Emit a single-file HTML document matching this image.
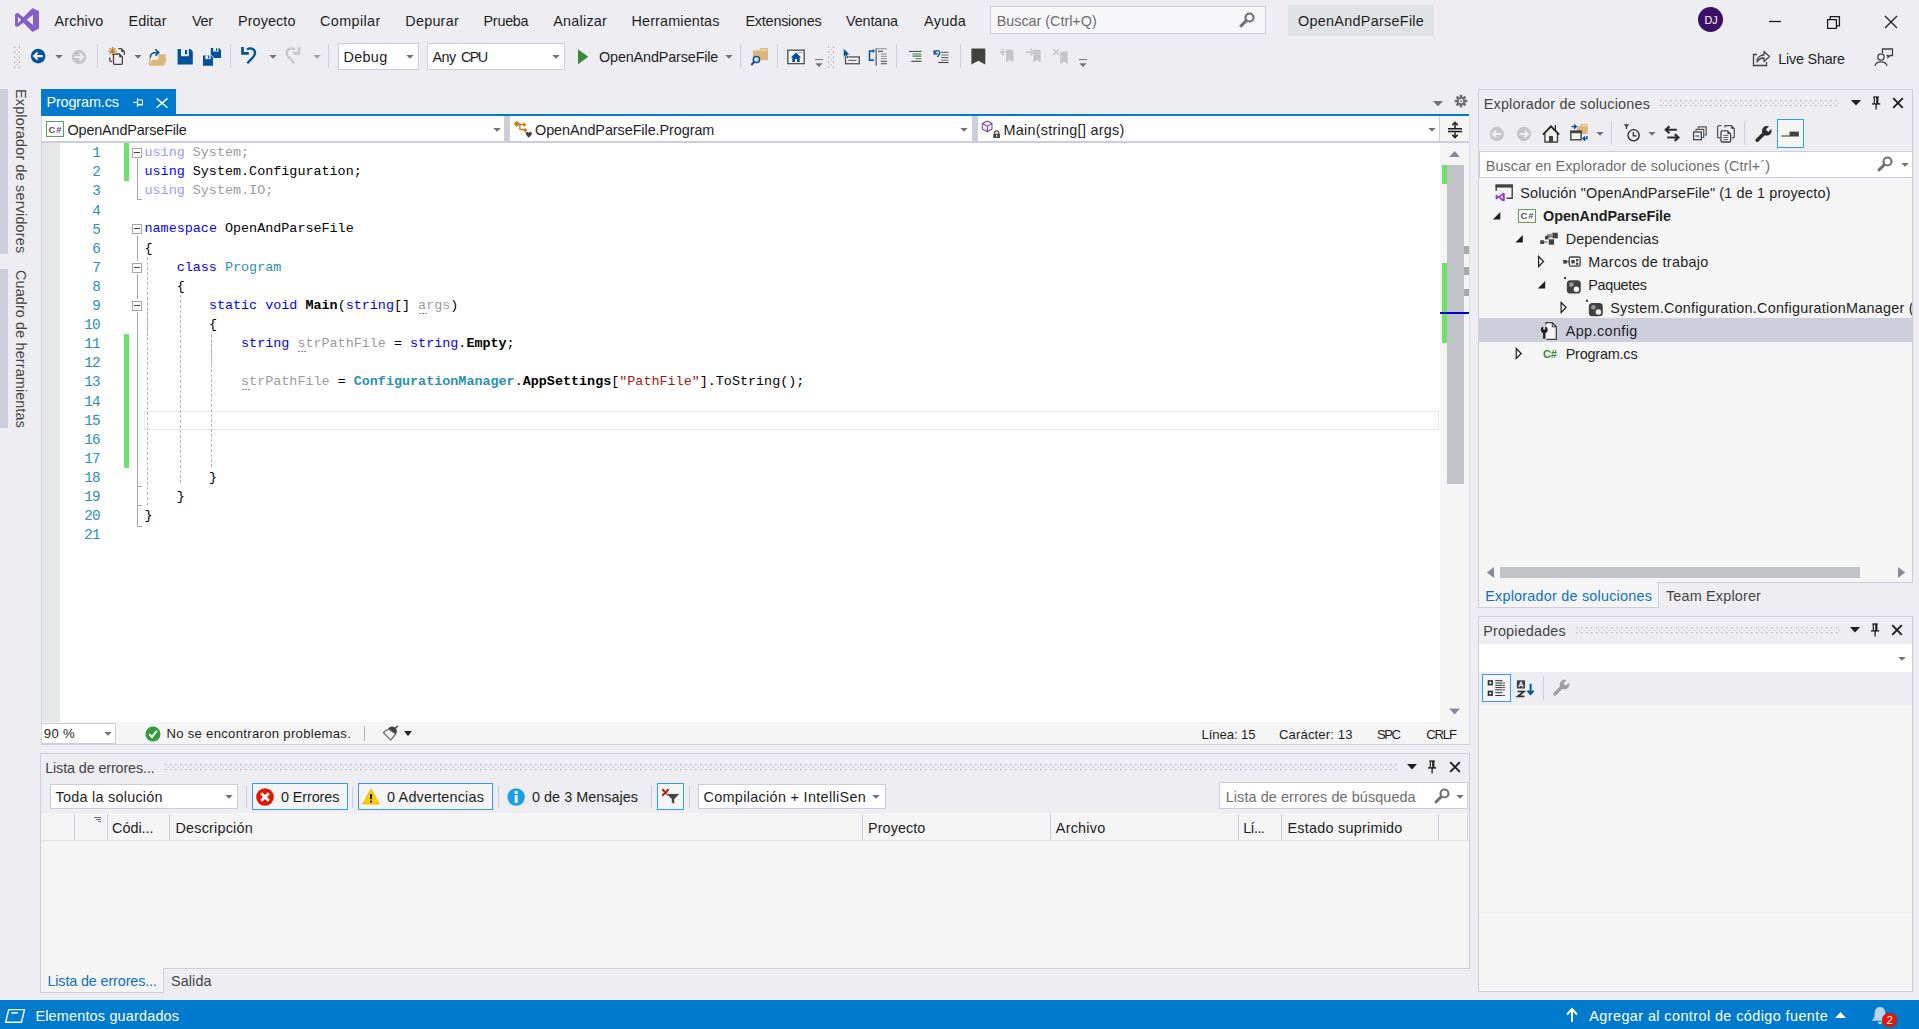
<!DOCTYPE html>
<html lang="es"><head><meta charset="utf-8"><title>OpenAndParseFile - Microsoft Visual Studio</title>
<style>
html,body{margin:0;padding:0;}
body{width:1919px;height:1029px;overflow:hidden;background:#EEEEF2;font-family:"Liberation Sans", sans-serif;position:relative;}
.r{position:absolute;display:block;}
.t{position:absolute;white-space:pre;line-height:20px;height:20px;}
</style></head>
<body>
<svg class="r" style="left:14px;top:7px;" width="26" height="26" viewBox="14 7 26 26"><path d="M32.500 7.950 L38.970 11.270 V28.600 L32.500 32.100 L23.400 22.800 L17.600 27 L15 25.800 V14.250 L17.600 12.850 L23.400 17.200 Z M33 14.800 L26.700 19.850 L33 25.100 Z M17.970 16.700 V23.200 L21.100 19.850 Z" fill="#865FC5" fill-rule="evenodd"/></svg>
<span class="t" style="left:54.5px;top:11.01px;font-size:14.4px;color:#1e1e1e;letter-spacing:0.123px;">Archivo</span>
<span class="t" style="left:128.5px;top:11.01px;font-size:14.4px;color:#1e1e1e;letter-spacing:0.074px;">Editar</span>
<span class="t" style="left:192px;top:11.01px;font-size:14.4px;color:#1e1e1e;letter-spacing:-0.244px;">Ver</span>
<span class="t" style="left:238px;top:11.01px;font-size:14.4px;color:#1e1e1e;letter-spacing:0.094px;">Proyecto</span>
<span class="t" style="left:320px;top:11.01px;font-size:14.4px;color:#1e1e1e;letter-spacing:0.390px;">Compilar</span>
<span class="t" style="left:405.3px;top:11.01px;font-size:14.4px;color:#1e1e1e;letter-spacing:0.231px;">Depurar</span>
<span class="t" style="left:483.5px;top:11.01px;font-size:14.4px;color:#1e1e1e;letter-spacing:-0.256px;">Prueba</span>
<span class="t" style="left:553.3px;top:11.01px;font-size:14.4px;color:#1e1e1e;letter-spacing:0.227px;">Analizar</span>
<span class="t" style="left:631.5px;top:11.01px;font-size:14.4px;color:#1e1e1e;letter-spacing:0.141px;">Herramientas</span>
<span class="t" style="left:745.5px;top:11.01px;font-size:14.4px;color:#1e1e1e;letter-spacing:-0.229px;">Extensiones</span>
<span class="t" style="left:846px;top:11.01px;font-size:14.4px;color:#1e1e1e;letter-spacing:-0.127px;">Ventana</span>
<span class="t" style="left:924px;top:11.01px;font-size:14.4px;color:#1e1e1e;letter-spacing:0.323px;">Ayuda</span>
<div class="r" style="left:990px;top:6px;width:276px;height:28px;background:#F7F7FA;box-sizing:border-box;border:1px solid #CCCEDB;"></div>
<span class="t" style="left:996.7px;top:11.01px;font-size:14.4px;color:#6D6D6D;letter-spacing:-0.025px;">Buscar (Ctrl+Q)</span>
<svg class="r" style="left:1238px;top:11px;" width="18" height="18" viewBox="0 0 18 18"><circle cx="11.5" cy="6.5" r="4" fill="none" stroke="#717171" stroke-width="2.2"/><path d="M8.6 9.4 L2.2 15.8" stroke="#717171" stroke-width="3" stroke-linecap="butt"/></svg>
<div class="r" style="left:1288px;top:5px;width:146px;height:31px;background:#E0E3E6;"></div>
<span class="t" style="left:1298px;top:11.41px;font-size:14.4px;color:#1e1e1e;letter-spacing:0.284px;">OpenAndParseFile</span>
<div class="r" style="left:1698px;top:7px;width:25px;height:25px;background:#3B1064;border-radius:50%;"></div>
<span class="t" style="left:1704.6px;top:10.26px;font-size:10.8px;color:#FFFFFF;letter-spacing:-0.069px;">DJ</span>
<svg class="r" style="left:1764px;top:10px;" width="24" height="24" viewBox="0 0 24 24"><path d="M5 11.5 H17" stroke="#1E1E1E" stroke-width="1.3"/></svg>
<svg class="r" style="left:1822px;top:10px;" width="24" height="24" viewBox="0 0 24 24"><path d="M5.6 9.6 H14.4 V18.4 H5.6 Z" fill="none" stroke="#1E1E1E" stroke-width="1.3"/><path d="M8.2 9.4 V6.6 H17.4 V15.8 H14.6" fill="none" stroke="#1E1E1E" stroke-width="1.3"/></svg>
<svg class="r" style="left:1879px;top:10px;" width="24" height="24" viewBox="0 0 24 24"><path d="M6 6 L18 18 M18 6 L6 18" stroke="#1E1E1E" stroke-width="1.3"/></svg>
<svg class="r" style="left:14px;top:46px;" width="7" height="22" viewBox="14 46 7 22"><rect x="14.1" y="46.6" width="1.1" height="1.1" fill="#8E8E94"/><rect x="18.9" y="46.6" width="1.1" height="1.1" fill="#8E8E94"/><rect x="16.5" y="49.1" width="1.2" height="1.2" fill="#B4B4BA"/><rect x="14.1" y="51.6" width="1.1" height="1.1" fill="#8E8E94"/><rect x="18.9" y="51.6" width="1.1" height="1.1" fill="#8E8E94"/><rect x="16.5" y="54.1" width="1.2" height="1.2" fill="#B4B4BA"/><rect x="14.1" y="56.6" width="1.1" height="1.1" fill="#8E8E94"/><rect x="18.9" y="56.6" width="1.1" height="1.1" fill="#8E8E94"/><rect x="16.5" y="59.1" width="1.2" height="1.2" fill="#B4B4BA"/><rect x="14.1" y="61.6" width="1.1" height="1.1" fill="#8E8E94"/><rect x="18.9" y="61.6" width="1.1" height="1.1" fill="#8E8E94"/><rect x="16.5" y="64.1" width="1.2" height="1.2" fill="#B4B4BA"/><rect x="14.1" y="66.6" width="1.1" height="1.1" fill="#8E8E94"/><rect x="18.9" y="66.6" width="1.1" height="1.1" fill="#8E8E94"/></svg>
<svg class="r" style="left:29px;top:47px;" width="19" height="19" viewBox="29 47 19 19"><circle cx="38.1" cy="56.1" r="7.3" fill="#00529B"/><path d="M42.8 56.1 H35 M37.6 52.6 L34 56.1 L37.6 59.6" fill="none" stroke="#F3F3F6" stroke-width="2.1"/></svg>
<svg class="r" style="left:54.7px;top:55px;" width="8.0" height="4" viewBox="54.7 55 8.0 4"><path d="M55.0 55 H62.400000000000006 L58.7 58.8 Z" fill="#717171"/></svg>
<svg class="r" style="left:70px;top:48px;" width="19" height="19" viewBox="70 48 19 19"><circle cx="79" cy="57" r="7.2" fill="#C6C6CA"/><path d="M74.3 57 H82.2 M79.5 53.5 L83.1 57 L79.5 60.5" fill="none" stroke="#EEEEF2" stroke-width="2.1"/></svg>
<div class="r" style="left:97px;top:44px;width:1px;height:24px;background:#CCCEDB;"></div>
<svg class="r" style="left:106px;top:45px;" width="21" height="22" viewBox="106 45 21 22"><path d="M118.3 48.7 H121.3 L124.3 51.7 V55" fill="none" stroke="#424242" stroke-width="1.3"/><path d="M121.2 48.8 V52 H124.3 Z" fill="#424242"/><path d="M109.8 57.3 V60.3 Q109.8 61.4 111 61.4 H112" fill="none" stroke="#424242" stroke-width="1.3"/><path d="M114.8 54 H119.3 L122.4 57 V63 Q122.4 64.3 121.2 64.3 H114.8 Q113.5 64.3 113.5 63 V55.2 Q113.5 54 114.8 54 Z" fill="#F0F0F2" stroke="#424242" stroke-width="1.3"/><path d="M119.2 54 V57.2 H122.4 Z" fill="#424242"/><path d="M112.5 46.9 V55.5 M108.2 51.2 H116.8 M109.5 48.2 L115.5 54.2 M115.5 48.2 L109.500 54.2" stroke="#C27D1A" stroke-width="1.15"/></svg>
<svg class="r" style="left:133.8px;top:55px;" width="8.0" height="4" viewBox="133.8 55 8.0 4"><path d="M134.10000000000002 55 H141.5 L137.8 58.8 Z" fill="#717171"/></svg>
<svg class="r" style="left:147px;top:47px;" width="22" height="21" viewBox="147 47 22 21"><path d="M158.4 54.2 H164.8 Q165.8 54.2 165.8 55.2 V60 H158.4 Z" fill="#DCB67A"/><path d="M149 56.5 H150.6 V65 H149 Z" fill="#DCB67A"/><path d="M149 65.7 L152.300 59.8 H166.8 L163.8 65.7 Z" fill="#DCB67A"/><path d="M150.6 57.6 C149.800 54.5 152 52.4 158 52.6 M155.4 49.4 L158.8 52.600 L155.400 55.8" fill="none" stroke="#00529B" stroke-width="1.45"/></svg>
<svg class="r" style="left:177px;top:48px;" width="17" height="18" viewBox="177 48 17 18"><path d="M177.600 49 H190.300 L192.800 51.5 V64.400 H177.600 Z" fill="#00529B"/><rect x="181" y="49" width="7.800" height="7.200" fill="#EEEEF2"/><rect x="185" y="50" width="2" height="4.200" fill="#00529B"/></svg>
<svg class="r" style="left:202px;top:47px;" width="20" height="20" viewBox="202 47 20 20"><path d="M210.800 48 H219 L221 50 V58 H210.800 Z" fill="#00529B"/><rect x="213.200" y="48" width="5.300" height="3.600" fill="#EEEEF2"/><rect x="216" y="48.300" width="1.200" height="2.600" fill="#00529B"/><path d="M202.500 55 H211.500 L213.600 57.200 V66.200 H202.500 Z" fill="#EEEEF2"/><path d="M203 55.500 H211 L213 57.500 V65.700 H203 Z" fill="#00529B"/><rect x="205.300" y="55.500" width="5.300" height="3.600" fill="#EEEEF2"/><rect x="208" y="55.800" width="1.200" height="2.600" fill="#00529B"/></svg>
<div class="r" style="left:230px;top:44px;width:1px;height:24px;background:#CCCEDB;"></div>
<svg class="r" style="left:239px;top:45px;" width="20" height="21" viewBox="239 45 20 21"><path d="M242.500 47 V53.400 H248.800" fill="none" stroke="#00529B" stroke-width="2.700"/><path d="M247 49.600 C249.500 47.800 252.800 48.200 254.300 50.400 C255.800 52.800 255 55 253 57.200 L247.300 63.300" fill="none" stroke="#00529B" stroke-width="2.300"/></svg>
<svg class="r" style="left:268.7px;top:55px;" width="8.0" height="4" viewBox="268.7 55 8.0 4"><path d="M269.0 55 H276.4 L272.7 58.8 Z" fill="#717171"/></svg>
<svg class="r" style="left:284px;top:45px;" width="20" height="21" viewBox="284 45 20 21"><path d="M299 47.200 V53.400 H293.300" fill="none" stroke="#C6C6CA" stroke-width="2.700"/><path d="M294.800 49.600 C292.300 47.800 289 48.200 287.500 50.400 C286 52.800 286.800 55 288.800 57.200 L294.500 63.300" fill="none" stroke="#C6C6CA" stroke-width="2.300"/></svg>
<svg class="r" style="left:312.8px;top:55px;" width="8.0" height="4" viewBox="312.8 55 8.0 4"><path d="M313.1 55 H320.5 L316.8 58.8 Z" fill="#A0A0A4"/></svg>
<div class="r" style="left:328px;top:44px;width:1px;height:24px;background:#CCCEDB;"></div>
<div class="r" style="left:338px;top:43px;width:81px;height:27px;background:#FFFFFF;box-sizing:border-box;border:1px solid #CCCEDB;"></div>
<span class="t" style="left:343.4px;top:46.51px;font-size:14.4px;color:#1e1e1e;letter-spacing:0.354px;">Debug</span>
<svg class="r" style="left:405.5px;top:55px;" width="8.0" height="4" viewBox="405.5 55 8.0 4"><path d="M405.8 55 H413.2 L409.5 58.8 Z" fill="#717171"/></svg>
<div class="r" style="left:427px;top:43px;width:138px;height:27px;background:#FFFFFF;box-sizing:border-box;border:1px solid #CCCEDB;"></div>
<span class="t" style="left:432.4px;top:46.51px;font-size:14.4px;color:#1e1e1e;letter-spacing:-0.485px;">Any</span>
<span class="t" style="left:461px;top:46.51px;font-size:14.4px;color:#1e1e1e;letter-spacing:-1.596px;">CPU</span>
<svg class="r" style="left:551.5px;top:55px;" width="8.0" height="4" viewBox="551.5 55 8.0 4"><path d="M551.8 55 H559.2 L555.5 58.8 Z" fill="#717171"/></svg>
<svg class="r" style="left:576px;top:48px;" width="14" height="18" viewBox="576 48 14 18"><path d="M578 49.300 L588.300 56.800 L578 64.300 Z" fill="#388A34"/></svg>
<span class="t" style="left:599px;top:46.51px;font-size:14.4px;color:#1e1e1e;letter-spacing:-0.148px;">OpenAndParseFile</span>
<svg class="r" style="left:724.5px;top:55px;" width="8.0" height="4" viewBox="724.5 55 8.0 4"><path d="M724.8 55 H732.2 L728.5 58.8 Z" fill="#717171"/></svg>
<div class="r" style="left:740px;top:44px;width:1px;height:24px;background:#CCCEDB;"></div>
<svg class="r" style="left:750px;top:47px;" width="20" height="20" viewBox="750 47 20 20"><path d="M752.900 50.500 H759 L760.500 48 H767 Q768 48 768 49 V60.300 H752.900 Z" fill="#DCB67A"/><rect x="760.800" y="49.500" width="6" height="1.300" fill="#F0E0C4"/><circle cx="756.400" cy="59.500" r="3.100" fill="#EEEEF2" stroke="#00529B" stroke-width="1.500"/><path d="M754.300 61.800 L751.300 65" stroke="#00529B" stroke-width="2"/></svg>
<div class="r" style="left:777px;top:44px;width:1px;height:24px;background:#CCCEDB;"></div>
<svg class="r" style="left:786px;top:48px;" width="21" height="18" viewBox="786 48 21 18"><rect x="787.800" y="50.200" width="16.400" height="13.400" fill="#F6F6F6" stroke="#555555" stroke-width="1.400"/><path d="M796 52.600 L790.800 57.600 H792.300 V62 H795 V59 H797 V62 H799.700 V57.600 H801.200 Z" fill="#00529B"/><path d="M798.500 52.500 H799.500 M800.700 52.500 H801.700" stroke="#424242" stroke-width="1"/></svg>
<svg class="r" style="left:814px;top:58px;" width="10" height="10" viewBox="814 58 10 10"><path d="M815 59.600 H823" stroke="#717171" stroke-width="1"/><path d="M815.300 63.300 H822.700 L819 67 Z" fill="#717171"/></svg>
<svg class="r" style="left:828px;top:46px;" width="7" height="22" viewBox="828 46 7 22"><rect x="828.1" y="46.6" width="1.1" height="1.1" fill="#8E8E94"/><rect x="832.9" y="46.6" width="1.1" height="1.1" fill="#8E8E94"/><rect x="830.5" y="49.1" width="1.2" height="1.2" fill="#B4B4BA"/><rect x="828.1" y="51.6" width="1.1" height="1.1" fill="#8E8E94"/><rect x="832.9" y="51.6" width="1.1" height="1.1" fill="#8E8E94"/><rect x="830.5" y="54.1" width="1.2" height="1.2" fill="#B4B4BA"/><rect x="828.1" y="56.6" width="1.1" height="1.1" fill="#8E8E94"/><rect x="832.9" y="56.6" width="1.1" height="1.1" fill="#8E8E94"/><rect x="830.5" y="59.1" width="1.2" height="1.2" fill="#B4B4BA"/><rect x="828.1" y="61.6" width="1.1" height="1.1" fill="#8E8E94"/><rect x="832.9" y="61.6" width="1.1" height="1.1" fill="#8E8E94"/><rect x="830.5" y="64.1" width="1.2" height="1.2" fill="#B4B4BA"/><rect x="828.1" y="66.6" width="1.1" height="1.1" fill="#8E8E94"/><rect x="832.9" y="66.6" width="1.1" height="1.1" fill="#8E8E94"/></svg>
<svg class="r" style="left:842px;top:47px;" width="19" height="19" viewBox="842 47 19 19"><rect x="845.500" y="56.900" width="13.800" height="6.800" fill="none" stroke="#555555" stroke-width="1.300"/><path d="M848.400 60.400 H856.300" stroke="#555555" stroke-width="1"/><path d="M843.400 48.200 V57.400 L845.600 55.400 L847.200 58.600 L848.900 57.800 L847.300 54.800 H850 Z" fill="#00529B" stroke="#EEEEF2" stroke-width="0.600"/></svg>
<svg class="r" style="left:867px;top:47px;" width="21" height="20" viewBox="867 47 21 20"><path d="M873.500 51 H869.500 V60.300 H874" fill="none" stroke="#00529B" stroke-width="1.500"/><path d="M872.800 48.800 L875 51 L872.800 53.200 Z" fill="#00529B"/><path d="M876.200 48.300 V65.800" stroke="#717171" stroke-width="1.400"/><path d="M876 48.800 H886.800" stroke="#8A8A8A" stroke-width="1"/><path d="M878 51.300 H883" stroke="#424242" stroke-width="1.100"/><path d="M880.800 54 H886.800 M880.800 56.300 H886.800 M880.800 58.600 H886.800" stroke="#8A8A8A" stroke-width="1"/><path d="M880.800 61.300 H886.800 M880.800 63.800 H886.800" stroke="#424242" stroke-width="1.100"/></svg>
<div class="r" style="left:896px;top:44px;width:1px;height:24px;background:#CCCEDB;"></div>
<svg class="r" style="left:908px;top:49px;" width="15" height="15" viewBox="908 49 15 15"><path d="M909 51.400 H921.400" stroke="#424242" stroke-width="1"/><path d="M912.500 54 H921.400 M912.500 56.200 H921.400" stroke="#388A34" stroke-width="1.200"/><path d="M915.600 58.700 H921.400" stroke="#717171" stroke-width="1.100"/><path d="M911.200 61.300 H921.400" stroke="#424242" stroke-width="1.100"/></svg>
<svg class="r" style="left:932px;top:48px;" width="18" height="17" viewBox="932 48 18 17"><path d="M934.200 50.300 V53.800 H937.600" fill="none" stroke="#00529B" stroke-width="1.400"/><path d="M934.500 53.500 C935 50 939.500 49.800 939.800 52.500 C940 54 938.500 55.200 937.500 57" fill="none" stroke="#00529B" stroke-width="1.400"/><path d="M941.200 52.400 H948.500 M941.200 55 H948.500 M941.200 57.600 H948.500 M941.200 60.200 H948.500" stroke="#717171" stroke-width="1.100"/><path d="M938.300 62.500 H948.500" stroke="#424242" stroke-width="1.100"/></svg>
<div class="r" style="left:960px;top:44px;width:1px;height:24px;background:#CCCEDB;"></div>
<svg class="r" style="left:970px;top:48px;" width="17" height="18" viewBox="970 48 17 18"><path d="M971.400 48.500 H985.300 V64.400 L978.350 60.800 L971.400 64.400 Z" fill="#424242"/></svg>
<svg class="r" style="left:998px;top:47px;" width="18" height="19" viewBox="998 47 18 19"><path d="M1006 49.800 H1013.400 V62.800 L1009.700 59.800 L1006 62.800 Z" fill="#C6C6CA"/><path d="M1008.500 52.200 H1001 M1003.800 49 L1000.600 52.200 L1003.800 55.400" fill="none" stroke="#C6C6CA" stroke-width="1.400"/></svg>
<svg class="r" style="left:1024px;top:47px;" width="19" height="19" viewBox="1024 47 19 19"><path d="M1033.400 49.800 H1040.700 V62.800 L1037.050 59.800 L1033.400 62.800 Z" fill="#C6C6CA"/><path d="M1025.600 52.200 H1033 M1030.300 49 L1033.500 52.200 L1030.300 55.400" fill="none" stroke="#C6C6CA" stroke-width="1.400"/></svg>
<svg class="r" style="left:1051px;top:47px;" width="19" height="19" viewBox="1051 47 19 19"><path d="M1060.300 51.400 H1067.600 V64.400 L1063.950 61.400 L1060.300 64.400 Z" fill="#C6C6CA"/><path d="M1053.300 49 L1059.300 55.200 M1059.300 49 L1053.300 55.200" fill="none" stroke="#C6C6CA" stroke-width="1.400"/></svg>
<svg class="r" style="left:1078px;top:58px;" width="10" height="10" viewBox="1078 58 10 10"><path d="M1079 59.600 H1087" stroke="#717171" stroke-width="1"/><path d="M1079.300 63.300 H1086.700 L1083 67 Z" fill="#717171"/></svg>
<svg class="r" style="left:1752.3px;top:49.4px;" width="19" height="18" viewBox="0 0 19 18"><path d="M5 5.5 H1.5 V16.5 H14.5 V13" fill="none" stroke="#424242" stroke-width="1.3"/><path d="M5 13 C5 8 8.5 6 12 6 V2.5 L17.5 7.5 L12 12.5 V9 C9 9 6.5 10 5 13 Z" fill="none" stroke="#424242" stroke-width="1.3" stroke-linejoin="round"/></svg>
<span class="t" style="left:1778.3px;top:48.71px;font-size:14.4px;color:#1e1e1e;letter-spacing:-0.222px;">Live Share</span>
<svg class="r" style="left:1874.3px;top:48px;" width="20" height="19" viewBox="0 0 20 19"><path d="M8.5 5 V1 H18.5 V7.5 H16 L14 9.5 V7.5 H12.5" fill="none" stroke="#424242" stroke-width="1.3"/><circle cx="7" cy="9" r="3.2" fill="none" stroke="#424242" stroke-width="1.3"/><path d="M1 18 C2 12.5 12 12.5 13 18" fill="none" stroke="#424242" stroke-width="1.3"/></svg>
<div class="r" style="left:0px;top:89px;width:8px;height:165px;background:#CCCEDB;"></div>
<div class="r" style="left:0px;top:269px;width:8px;height:159px;background:#CCCEDB;"></div>
<span class="t" style="left:31.0px;top:89.3px;font-size:14.4px;color:#444444;transform-origin:0 0;transform:rotate(90deg);letter-spacing:0.179px;">Explorador de servidores</span>
<span class="t" style="left:31.0px;top:269.5px;font-size:14.4px;color:#444444;transform-origin:0 0;transform:rotate(90deg);letter-spacing:0.131px;">Cuadro de herramientas</span>
<div class="r" style="left:41px;top:89px;width:135px;height:25px;background:#007ACC;"></div>
<div class="r" style="left:41px;top:113.7px;width:1428px;height:2.5999999999999943px;background:#007ACC;"></div>
<span class="t" style="left:46.4px;top:92.41px;font-size:14.4px;color:#FFFFFF;letter-spacing:-0.113px;">Program.cs</span>
<svg class="r" style="left:132px;top:96px;" width="13" height="13" viewBox="132 96 13 13"><path d="M133.100 102.400 H137" stroke="#FFFFFF" stroke-width="1.100"/><path d="M137.500 98.300 V106.800" stroke="#FFFFFF" stroke-width="1.200"/><path d="M138 99.900 H142.400 V104.500" fill="none" stroke="#FFFFFF" stroke-width="1"/><path d="M138 104.700 H142.900" stroke="#FFFFFF" stroke-width="1.600"/></svg>
<svg class="r" style="left:155px;top:97px;" width="14" height="12" viewBox="155 97 14 12"><path d="M156.600 98.400 L167.500 107.700 M167.500 98.400 L156.600 107.700" stroke="#FFFFFF" stroke-width="1.400"/></svg>
<svg class="r" style="left:1432px;top:100px;" width="12" height="7" viewBox="1432 100 12 7"><path d="M1432.900 100.900 H1443 L1437.950 106.200 Z" fill="#717171"/></svg>
<svg class="r" style="left:1453px;top:93px;" width="16" height="16" viewBox="1453 93 16 16"><path d="M1461 101 L1467.30 101.00" stroke="#6D6D6D" stroke-width="2.500"/><path d="M1461 101 L1465.45 105.45" stroke="#6D6D6D" stroke-width="2.500"/><path d="M1461 101 L1461.00 107.30" stroke="#6D6D6D" stroke-width="2.500"/><path d="M1461 101 L1456.55 105.45" stroke="#6D6D6D" stroke-width="2.500"/><path d="M1461 101 L1454.70 101.00" stroke="#6D6D6D" stroke-width="2.500"/><path d="M1461 101 L1456.55 96.55" stroke="#6D6D6D" stroke-width="2.500"/><path d="M1461 101 L1461.00 94.70" stroke="#6D6D6D" stroke-width="2.500"/><path d="M1461 101 L1465.45 96.55" stroke="#6D6D6D" stroke-width="2.500"/><circle cx="1461" cy="101" r="4.300" fill="#6D6D6D"/><circle cx="1461" cy="101" r="2.300" fill="#EEEEF2"/><circle cx="1461" cy="101" r="0.900" fill="#6D6D6D"/></svg>
<div class="r" style="left:41px;top:116px;width:1399px;height:25px;background:#FFFFFF;"></div>
<div class="r" style="left:41px;top:141px;width:1428px;height:2px;background:#CCCEDB;"></div>
<div class="r" style="left:41px;top:116px;width:1px;height:25px;background:#CCCEDB;"></div>
<div class="r" style="left:504px;top:116px;width:6px;height:25px;background:#CCCEDB;"></div>
<div class="r" style="left:972px;top:116px;width:6px;height:25px;background:#CCCEDB;"></div>
<div class="r" style="left:1440px;top:116px;width:29px;height:25px;background:#F5F5F5;"></div>
<div class="r" style="left:46px;top:121px;width:18px;height:16px;background:#FFFFFF;box-sizing:border-box;border:1.400px solid #5FA05C;"></div>
<span class="t" style="left:48.4px;top:119.71px;font-size:9.5px;color:#555555;font-weight:bold;letter-spacing:0.963px;">C#</span>
<span class="t" style="left:67.5px;top:119.91px;font-size:14.4px;color:#1e1e1e;letter-spacing:-0.148px;">OpenAndParseFile</span>
<svg class="r" style="left:492.5px;top:128px;" width="8.0" height="4" viewBox="492.5 128 8.0 4"><path d="M492.8 128 H500.2 L496.5 131.8 Z" fill="#717171"/></svg>
<svg class="r" style="left:512px;top:118px;" width="22" height="22" viewBox="512 118 22 22"><path d="M513.75 123.8 L516.85 120.7 L519.95 123.8 L516.85 126.89999999999999 Z" fill="#C97F14"/><path d="M522.3 124.7 L524.3 122.7 L526.3 124.7 L524.3 126.7 Z" fill="#C97F14"/><path d="M523.0999999999999 130.2 L525.3 127.99999999999999 L527.5 130.2 L525.3 132.39999999999998 Z" fill="#C97F14"/><path d="M518 124.500 H524 M519.900 124.400 V129.500 H525" fill="none" stroke="#C97F14" stroke-width="1.300"/><path d="M525.800 133.600 C525.800 131.500 528.800 131.500 528.800 133.400 C528.800 131.500 531.900 131.500 531.900 133.600 C531.900 135.300 528.800 137.700 528.800 137.700 C528.800 137.700 525.800 135.300 525.800 133.600 Z" fill="#424242"/></svg>
<span class="t" style="left:535px;top:119.91px;font-size:14.4px;color:#1e1e1e;letter-spacing:-0.063px;">OpenAndParseFile.Program</span>
<svg class="r" style="left:960px;top:128px;" width="8" height="4" viewBox="960 128 8 4"><path d="M960.3 128 H967.7 L964 131.8 Z" fill="#717171"/></svg>
<svg class="r" style="left:980px;top:119px;" width="22" height="21" viewBox="980 119 22 21"><path d="M987.300 121 L992 123.500 V129 L987.400 131.700 L982.300 129 V123.500 Z M982.300 123.500 L987.400 126.100 L992 123.500 M987.400 126.100 V131.700" fill="#F7F4FA" stroke="#7B3FA6" stroke-width="1.050" stroke-linejoin="round"/><rect x="993.300" y="133.700" width="6.600" height="4.300" fill="#424242"/><path d="M994.600 133.800 V132.800 C994.600 130.200 998.700 130.200 998.700 132.800 V133.800" fill="none" stroke="#424242" stroke-width="1.300"/><rect x="996.100" y="134.800" width="1.100" height="2" fill="#FFFFFF"/></svg>
<span class="t" style="left:1003.4px;top:119.91px;font-size:14.4px;color:#1e1e1e;letter-spacing:0.277px;">Main(string[] args)</span>
<svg class="r" style="left:1427.5px;top:128px;" width="8.0" height="4" viewBox="1427.5 128 8.0 4"><path d="M1427.8 128 H1435.2 L1431.5 131.8 Z" fill="#717171"/></svg>
<div class="r" style="left:1439px;top:116px;width:1px;height:25px;background:#CCCEDB;"></div>
<svg class="r" style="left:1446px;top:120px;" width="18" height="20" viewBox="1446 120 18 20"><rect x="1448" y="128" width="14" height="4.200" fill="#B4B4B4"/><path d="M1448 128.600 H1462 M1448 131.600 H1462" stroke="#1E1E1E" stroke-width="1.200"/><path d="M1455 123 V128 M1455 132.200 V137" stroke="#424242" stroke-width="1.800"/><path d="M1452.300 125.200 L1455 122.300 L1457.700 125.200 M1452.300 134.800 L1455 137.700 L1457.700 134.800" fill="none" stroke="#1E1E1E" stroke-width="1.600"/></svg>
<div class="r" style="left:41px;top:143px;width:1399px;height:579px;background:#FFFFFF;"></div>
<div class="r" style="left:41px;top:143px;width:19px;height:579px;background:#E6E7E8;"></div>
<div class="r" style="left:123.7px;top:143px;width:5.700000000000003px;height:38px;background:#6CE26C;"></div>
<div class="r" style="left:123.7px;top:333.5px;width:5.700000000000003px;height:134.40000000000003px;background:#6CE26C;"></div>
<div class="r" style="left:143.5px;top:411px;width:1295.5px;height:18.69999999999999px;box-sizing:border-box;border:1.700px solid #E6E6F2;"></div>
<span class="t" style="left:92.253px;top:143.29px;font-size:14.3px;color:#2B91AF;font-family:'Liberation Mono',monospace;letter-spacing:-0.547px;">1</span>
<span class="t" style="left:92.253px;top:162.39px;font-size:14.3px;color:#2B91AF;font-family:'Liberation Mono',monospace;letter-spacing:-0.547px;">2</span>
<span class="t" style="left:92.253px;top:181.49px;font-size:14.3px;color:#2B91AF;font-family:'Liberation Mono',monospace;letter-spacing:-0.547px;">3</span>
<span class="t" style="left:92.253px;top:200.59px;font-size:14.3px;color:#2B91AF;font-family:'Liberation Mono',monospace;letter-spacing:-0.547px;">4</span>
<span class="t" style="left:92.253px;top:219.69px;font-size:14.3px;color:#2B91AF;font-family:'Liberation Mono',monospace;letter-spacing:-0.547px;">5</span>
<span class="t" style="left:92.253px;top:238.79px;font-size:14.3px;color:#2B91AF;font-family:'Liberation Mono',monospace;letter-spacing:-0.547px;">6</span>
<span class="t" style="left:92.253px;top:257.89px;font-size:14.3px;color:#2B91AF;font-family:'Liberation Mono',monospace;letter-spacing:-0.547px;">7</span>
<span class="t" style="left:92.253px;top:276.99px;font-size:14.3px;color:#2B91AF;font-family:'Liberation Mono',monospace;letter-spacing:-0.547px;">8</span>
<span class="t" style="left:92.253px;top:296.09px;font-size:14.3px;color:#2B91AF;font-family:'Liberation Mono',monospace;letter-spacing:-0.547px;">9</span>
<span class="t" style="left:84.20599999999999px;top:315.19px;font-size:14.3px;color:#2B91AF;font-family:'Liberation Mono',monospace;letter-spacing:-0.719px;">10</span>
<span class="t" style="left:84.20599999999999px;top:334.29px;font-size:14.3px;color:#2B91AF;font-family:'Liberation Mono',monospace;letter-spacing:-0.719px;">11</span>
<span class="t" style="left:84.20599999999999px;top:353.39px;font-size:14.3px;color:#2B91AF;font-family:'Liberation Mono',monospace;letter-spacing:-0.719px;">12</span>
<span class="t" style="left:84.20599999999999px;top:372.49px;font-size:14.3px;color:#2B91AF;font-family:'Liberation Mono',monospace;letter-spacing:-0.719px;">13</span>
<span class="t" style="left:84.20599999999999px;top:391.59px;font-size:14.3px;color:#2B91AF;font-family:'Liberation Mono',monospace;letter-spacing:-0.719px;">14</span>
<span class="t" style="left:84.20599999999999px;top:410.69px;font-size:14.3px;color:#2B91AF;font-family:'Liberation Mono',monospace;letter-spacing:-0.719px;">15</span>
<span class="t" style="left:84.20599999999999px;top:429.79px;font-size:14.3px;color:#2B91AF;font-family:'Liberation Mono',monospace;letter-spacing:-0.719px;">16</span>
<span class="t" style="left:84.20599999999999px;top:448.89px;font-size:14.3px;color:#2B91AF;font-family:'Liberation Mono',monospace;letter-spacing:-0.719px;">17</span>
<span class="t" style="left:84.20599999999999px;top:467.99px;font-size:14.3px;color:#2B91AF;font-family:'Liberation Mono',monospace;letter-spacing:-0.719px;">18</span>
<span class="t" style="left:84.20599999999999px;top:487.09px;font-size:14.3px;color:#2B91AF;font-family:'Liberation Mono',monospace;letter-spacing:-0.719px;">19</span>
<span class="t" style="left:84.20599999999999px;top:506.19px;font-size:14.3px;color:#2B91AF;font-family:'Liberation Mono',monospace;letter-spacing:-0.719px;">20</span>
<span class="t" style="left:84.20599999999999px;top:525.29px;font-size:14.3px;color:#2B91AF;font-family:'Liberation Mono',monospace;letter-spacing:-0.719px;">21</span>
<div class="r" style="left:132px;top:148px;width:10px;height:10px;background:#FFFFFF;box-sizing:border-box;border:1px solid #A5A5A5;"></div>
<div class="r" style="left:134.2px;top:152px;width:5.800000000000011px;height:1.1999999999999886px;background:#444444;"></div>
<div class="r" style="left:137px;top:159.3px;width:1px;height:40.89999999999998px;background:#A5A5A5;"></div>
<div class="r" style="left:137px;top:199.2px;width:5px;height:1.0px;background:#A5A5A5;"></div>
<div class="r" style="left:132px;top:224px;width:10px;height:10px;background:#FFFFFF;box-sizing:border-box;border:1px solid #A5A5A5;"></div>
<div class="r" style="left:134.2px;top:228px;width:5.800000000000011px;height:1.1999999999999886px;background:#444444;"></div>
<div class="r" style="left:137px;top:235.70000000000002px;width:1px;height:25.400000000000006px;background:#A5A5A5;"></div>
<div class="r" style="left:132px;top:263px;width:10px;height:10px;background:#FFFFFF;box-sizing:border-box;border:1px solid #A5A5A5;"></div>
<div class="r" style="left:134.2px;top:267px;width:5.800000000000011px;height:1.1999999999999886px;background:#444444;"></div>
<div class="r" style="left:137px;top:273.90000000000003px;width:1px;height:25.399999999999977px;background:#A5A5A5;"></div>
<div class="r" style="left:132px;top:301px;width:10px;height:10px;background:#FFFFFF;box-sizing:border-box;border:1px solid #A5A5A5;"></div>
<div class="r" style="left:134.2px;top:305px;width:5.800000000000011px;height:1.1999999999999886px;background:#444444;"></div>
<div class="r" style="left:137px;top:312.1px;width:1px;height:214.5000000000001px;background:#A5A5A5;"></div>
<div class="r" style="left:137px;top:486.20000000000005px;width:5px;height:1.0px;background:#A5A5A5;"></div>
<div class="r" style="left:137px;top:505.3px;width:5px;height:1.0px;background:#A5A5A5;"></div>
<div class="r" style="left:137px;top:525.6000000000001px;width:5px;height:1.0px;background:#A5A5A5;"></div>
<div class="r" style="left:147px;top:257.1px;width:1px;height:248.2px;background:repeating-linear-gradient(to bottom,#B4B4B4 0,#B4B4B4 3.500px,transparent 3.500px,transparent 5px);"></div>
<div class="r" style="left:180px;top:295.3px;width:1px;height:189.40000000000003px;background:repeating-linear-gradient(to bottom,#B4B4B4 0,#B4B4B4 3.500px,transparent 3.500px,transparent 5px);"></div>
<div class="r" style="left:211px;top:333.5px;width:1px;height:133.60000000000002px;background:repeating-linear-gradient(to bottom,#B4B4B4 0,#B4B4B4 3.500px,transparent 3.500px,transparent 5px);"></div>
<span class="t" style="left:144.5px;top:143.03px;font-size:13.41px;color:#9A9AFF;font-family:'Liberation Mono',monospace;letter-spacing:0.001px;">using</span>
<span class="t" style="left:192.78px;top:143.03px;font-size:13.41px;color:#9B9B9B;font-family:'Liberation Mono',monospace;">System;</span>
<span class="t" style="left:144.5px;top:162.13px;font-size:13.41px;color:#0000FF;font-family:'Liberation Mono',monospace;letter-spacing:0.001px;">using</span>
<span class="t" style="left:192.78px;top:162.13px;font-size:13.41px;color:#000000;font-family:'Liberation Mono',monospace;letter-spacing:0.002px;">System.Configuration;</span>
<span class="t" style="left:144.5px;top:181.23px;font-size:13.41px;color:#9A9AFF;font-family:'Liberation Mono',monospace;letter-spacing:0.001px;">using</span>
<span class="t" style="left:192.78px;top:181.23px;font-size:13.41px;color:#9B9B9B;font-family:'Liberation Mono',monospace;letter-spacing:0.002px;">System.IO;</span>
<span class="t" style="left:144.5px;top:219.43px;font-size:13.41px;color:#0000FF;font-family:'Liberation Mono',monospace;letter-spacing:0.002px;">namespace</span>
<span class="t" style="left:224.97px;top:219.43px;font-size:13.41px;color:#000000;font-family:'Liberation Mono',monospace;letter-spacing:0.001px;">OpenAndParseFile</span>
<span class="t" style="left:144.5px;top:238.53px;font-size:13.41px;color:#000000;font-family:'Liberation Mono',monospace;letter-spacing:0.003px;">{</span>
<span class="t" style="left:176.69px;top:257.63px;font-size:13.41px;color:#0000FF;font-family:'Liberation Mono',monospace;">class</span>
<span class="t" style="left:224.97px;top:257.63px;font-size:13.41px;color:#2B91AF;font-family:'Liberation Mono',monospace;">Program</span>
<span class="t" style="left:176.69px;top:276.73px;font-size:13.41px;color:#000000;font-family:'Liberation Mono',monospace;letter-spacing:-0.007px;">{</span>
<span class="t" style="left:208.88px;top:295.83px;font-size:13.41px;color:#0000FF;font-family:'Liberation Mono',monospace;">static</span>
<span class="t" style="left:265.21px;top:295.83px;font-size:13.41px;color:#0000FF;font-family:'Liberation Mono',monospace;letter-spacing:-0.002px;">void</span>
<span class="t" style="left:305.44px;top:295.83px;font-size:13.41px;color:#000000;font-weight:bold;font-family:'Liberation Mono',monospace;">Main</span>
<span class="t" style="left:337.63px;top:295.83px;font-size:13.41px;color:#000000;font-family:'Liberation Mono',monospace;letter-spacing:0.003px;">(</span>
<span class="t" style="left:345.68px;top:295.83px;font-size:13.41px;color:#0000FF;font-family:'Liberation Mono',monospace;">string</span>
<span class="t" style="left:393.96px;top:295.83px;font-size:13.41px;color:#000000;font-family:'Liberation Mono',monospace;">[] </span>
<span class="t" style="left:418.1px;top:295.83px;font-size:13.41px;color:#9B9B9B;font-family:'Liberation Mono',monospace;">args</span>
<span class="t" style="left:450.29px;top:295.83px;font-size:13.41px;color:#000000;font-family:'Liberation Mono',monospace;letter-spacing:-0.007px;">)</span>
<span class="t" style="left:208.88px;top:314.93px;font-size:13.41px;color:#000000;font-family:'Liberation Mono',monospace;letter-spacing:-0.007px;">{</span>
<span class="t" style="left:241.06px;top:334.03px;font-size:13.41px;color:#0000FF;font-family:'Liberation Mono',monospace;letter-spacing:0.002px;">string</span>
<span class="t" style="left:297.39px;top:334.03px;font-size:13.41px;color:#9B9B9B;font-family:'Liberation Mono',monospace;letter-spacing:0.002px;">strPathFile</span>
<span class="t" style="left:393.96px;top:334.03px;font-size:13.41px;color:#000000;font-family:'Liberation Mono',monospace;letter-spacing:-0.002px;">= </span>
<span class="t" style="left:410.05px;top:334.03px;font-size:13.41px;color:#0000FF;font-family:'Liberation Mono',monospace;">string</span>
<span class="t" style="left:458.33px;top:334.03px;font-size:13.41px;color:#000000;font-family:'Liberation Mono',monospace;letter-spacing:0.003px;">.</span>
<span class="t" style="left:466.38px;top:334.03px;font-size:13.41px;color:#000000;font-weight:bold;font-family:'Liberation Mono',monospace;letter-spacing:0.001px;">Empty</span>
<span class="t" style="left:506.62px;top:334.03px;font-size:13.41px;color:#000000;font-family:'Liberation Mono',monospace;letter-spacing:-0.007px;">;</span>
<span class="t" style="left:241.06px;top:372.23px;font-size:13.41px;color:#9B9B9B;font-family:'Liberation Mono',monospace;letter-spacing:0.002px;">strPathFile</span>
<span class="t" style="left:337.63px;top:372.23px;font-size:13.41px;color:#000000;font-family:'Liberation Mono',monospace;letter-spacing:-0.002px;">= </span>
<span class="t" style="left:353.72px;top:372.23px;font-size:13.41px;color:#2B91AF;font-weight:bold;font-family:'Liberation Mono',monospace;letter-spacing:0.002px;">ConfigurationManager</span>
<span class="t" style="left:514.66px;top:372.23px;font-size:13.41px;color:#000000;font-family:'Liberation Mono',monospace;letter-spacing:0.003px;">.</span>
<span class="t" style="left:522.71px;top:372.23px;font-size:13.41px;color:#000000;font-weight:bold;font-family:'Liberation Mono',monospace;letter-spacing:0.002px;">AppSettings</span>
<span class="t" style="left:611.23px;top:372.23px;font-size:13.41px;color:#000000;font-family:'Liberation Mono',monospace;letter-spacing:-0.007px;">[</span>
<span class="t" style="left:619.27px;top:372.23px;font-size:13.41px;color:#A31515;font-family:'Liberation Mono',monospace;letter-spacing:0.002px;">"PathFile"</span>
<span class="t" style="left:699.74px;top:372.23px;font-size:13.41px;color:#000000;font-family:'Liberation Mono',monospace;letter-spacing:0.001px;">].ToString();</span>
<span class="t" style="left:208.88px;top:467.73px;font-size:13.41px;color:#000000;font-family:'Liberation Mono',monospace;letter-spacing:-0.007px;">}</span>
<span class="t" style="left:176.69px;top:486.83px;font-size:13.41px;color:#000000;font-family:'Liberation Mono',monospace;letter-spacing:-0.007px;">}</span>
<span class="t" style="left:144.5px;top:505.93px;font-size:13.41px;color:#000000;font-family:'Liberation Mono',monospace;letter-spacing:0.003px;">}</span>
<div class="r" style="left:419.098px;top:313px;width:2.0px;height:1px;background:#8C8C8C;"></div>
<div class="r" style="left:422.098px;top:313px;width:2.0px;height:1px;background:#8C8C8C;"></div>
<div class="r" style="left:425.098px;top:313px;width:2.0px;height:1px;background:#8C8C8C;"></div>
<div class="r" style="left:298.39300000000003px;top:351px;width:2.0px;height:1px;background:#8C8C8C;"></div>
<div class="r" style="left:301.39300000000003px;top:351px;width:2.0px;height:1px;background:#8C8C8C;"></div>
<div class="r" style="left:304.39300000000003px;top:351px;width:2.0px;height:1px;background:#8C8C8C;"></div>
<div class="r" style="left:242.06400000000002px;top:389px;width:2.0px;height:1px;background:#8C8C8C;"></div>
<div class="r" style="left:245.06400000000002px;top:389px;width:2.0px;height:1px;background:#8C8C8C;"></div>
<div class="r" style="left:248.06400000000002px;top:389px;width:2.0px;height:1px;background:#8C8C8C;"></div>
<div class="r" style="left:1440px;top:143px;width:29px;height:579px;background:#F5F5F5;"></div>
<div class="r" style="left:1446.5px;top:165px;width:17.200000000000045px;height:318.5px;background:#C2C3C9;"></div>
<svg class="r" style="left:1448px;top:150px;" width="14" height="8" viewBox="1448 150 14 8"><path d="M1449.200 156.900 L1454.600 151 L1460 156.900 Z" fill="#868999"/></svg>
<svg class="r" style="left:1448px;top:707px;" width="14" height="9" viewBox="1448 707 14 9"><path d="M1449.200 708.500 L1454.600 714.400 L1460 708.500 Z" fill="#868999"/></svg>
<div class="r" style="left:1441.5px;top:165px;width:5.0px;height:18.5px;background:#6CE26C;"></div>
<div class="r" style="left:1441.5px;top:263px;width:5.0px;height:80px;background:#6CE26C;"></div>
<div class="r" style="left:1463.5px;top:246px;width:5.5px;height:7.5px;background:#A9A9A9;"></div>
<div class="r" style="left:1463.5px;top:267px;width:5.5px;height:7.5px;background:#A9A9A9;"></div>
<div class="r" style="left:1463.5px;top:288.5px;width:5.5px;height:7.5px;background:#A9A9A9;"></div>
<div class="r" style="left:1440px;top:312px;width:29px;height:2px;background:#0000CD;"></div>
<div class="r" style="left:41px;top:722px;width:1428px;height:23px;background:#F5F5F5;"></div>
<div class="r" style="left:41px;top:744px;width:1428px;height:1px;background:#CCCEDB;"></div>
<div class="r" style="left:41px;top:723px;width:75px;height:21px;background:#FFFFFF;box-sizing:border-box;border:1px solid #CCCEDB;"></div>
<span class="t" style="left:43.8px;top:724.46px;font-size:13.1px;color:#1e1e1e;letter-spacing:0.326px;">90 %</span>
<svg class="r" style="left:104.4px;top:732px;" width="8.0" height="4" viewBox="104.4 732 8.0 4"><path d="M104.7 732 H112.10000000000001 L108.4 735.8 Z" fill="#717171"/></svg>
<svg class="r" style="left:144.5px;top:726px;" width="16" height="16" viewBox="0 0 16 16"><circle cx="8" cy="8" r="7.5" fill="#2E9E3B"/><path d="M4.2 8.2 L7 11 L11.8 4.8" fill="none" stroke="#fff" stroke-width="2"/></svg>
<span class="t" style="left:166.4px;top:724.46px;font-size:13.1px;color:#1e1e1e;letter-spacing:0.308px;">No se encontraron problemas.</span>
<div class="r" style="left:364px;top:726px;width:1px;height:15px;background:#B0B0B8;"></div>
<svg class="r" style="left:381px;top:724px;" width="19" height="19" viewBox="381 724 19 19"><path d="M388.600 728.900 L383.300 732.500 L390.700 740.100 L395.700 734 Z" fill="#F2F2F2" stroke="#6A6A6A" stroke-width="1.200" stroke-linejoin="round"/><path d="M388.400 728.500 A4.600 4.600 0 0 1 396 733.900 Z" fill="#424242"/><path d="M393.800 730 L397.300 726.300" stroke="#4A4A4A" stroke-width="1.600" stroke-linecap="round"/></svg>
<svg class="r" style="left:403px;top:730px;" width="10" height="7" viewBox="403 730 10 7"><path d="M404 731 H412 L408 736 Z" fill="#1E1E1E"/></svg>
<span class="t" style="left:1201.6px;top:724.86px;font-size:13.1px;color:#1e1e1e;letter-spacing:-0.083px;">Línea: 15</span>
<span class="t" style="left:1279px;top:724.86px;font-size:13.1px;color:#1e1e1e;letter-spacing:0.134px;">Carácter: 13</span>
<span class="t" style="left:1377px;top:724.86px;font-size:13.1px;color:#1e1e1e;letter-spacing:-1.455px;">SPC</span>
<span class="t" style="left:1426.2px;top:724.86px;font-size:13.1px;color:#1e1e1e;letter-spacing:-1.144px;">CRLF</span>
<div class="r" style="left:1469px;top:116px;width:1px;height:629px;background:#DCDDE8;"></div>
<div class="r" style="left:40.5px;top:116px;width:1.0px;height:629px;background:#D4D6E2;"></div>
<svg class="r" width="0" height="0" style="left:0;top:0"><defs><pattern id="gp" width="5" height="5" patternUnits="userSpaceOnUse"><rect x="0.300" y="0.200" width="1.100" height="1.100" fill="#909096"/><rect x="2.800" y="2.700" width="1.100" height="1.100" fill="#B9B9C0"/></pattern></defs></svg>
<div class="r" style="left:40px;top:753px;width:1430px;height:216px;background:#F5F5F5;box-sizing:border-box;border:1px solid #CCCEDB;"></div>
<div class="r" style="left:41px;top:754px;width:1428px;height:59px;background:#EEEEF2;"></div>
<span class="t" style="left:45.2px;top:758.01px;font-size:14.4px;color:#444444;letter-spacing:-0.134px;">Lista de errores...</span>
<svg class="r" style="left:165px;top:764px" width="1232" height="6.500" viewBox="0 0 1232 6.500"><rect width="1232" height="6.500" fill="url(#gp)"/></svg>
<svg class="r" style="left:1406.5px;top:764px;" width="10" height="6" viewBox="0 0 10 6"><path d="M0 0 H10 L5 5.5 Z" fill="#1E1E1E"/></svg>
<svg class="r" style="left:1427px;top:760px;" width="10" height="14" viewBox="0 0 10 14"><path d="M2.400 1 H7.800" stroke="#1E1E1E" stroke-width="1.300"/><path d="M3.300 1 V7.500" stroke="#1E1E1E" stroke-width="1.200"/><rect x="5.200" y="1" width="2.200" height="6.800" fill="#1E1E1E"/><path d="M1 7.900 H9.200" stroke="#1E1E1E" stroke-width="1.400"/><path d="M5.100 8 V13.600" stroke="#1E1E1E" stroke-width="1.300"/></svg>
<svg class="r" style="left:1448.5px;top:761px;" width="12" height="12" viewBox="0 0 12 12"><path d="M1.200 1.200 L10.800 10.800 M10.800 1.200 L1.200 10.800" stroke="#1E1E1E" stroke-width="1.900"/></svg>
<div class="r" style="left:50px;top:784px;width:188px;height:25px;background:#FFFFFF;box-sizing:border-box;border:1px solid #CCCEDB;"></div>
<span class="t" style="left:55.5px;top:787.21px;font-size:14.4px;color:#1e1e1e;letter-spacing:0.258px;">Toda la solución</span>
<svg class="r" style="left:224.7px;top:795px;" width="8.0" height="4" viewBox="224.7 795 8.0 4"><path d="M225.0 795 H232.39999999999998 L228.7 798.8 Z" fill="#717171"/></svg>
<div class="r" style="left:246px;top:786px;width:1px;height:22px;background:#CCCEDB;"></div>
<div class="r" style="left:252px;top:783px;width:96px;height:27px;background:#F5F5F5;box-sizing:border-box;border:1px solid #3399FF;"></div>
<svg class="r" style="left:255px;top:787px;" width="20" height="20" viewBox="255 787 20 20"><circle cx="265" cy="797" r="8.800" fill="#E51400"/><path d="M261.200 793.200 L268.800 800.800 M268.800 793.200 L261.200 800.800" stroke="#FFFFFF" stroke-width="2.900"/></svg>
<span class="t" style="left:281px;top:787.21px;font-size:14.4px;color:#1e1e1e;letter-spacing:-0.104px;">0 Errores</span>
<div class="r" style="left:352px;top:786px;width:1px;height:22px;background:#CCCEDB;"></div>
<div class="r" style="left:358px;top:783px;width:135px;height:27px;background:#F5F5F5;box-sizing:border-box;border:1px solid #3399FF;"></div>
<svg class="r" style="left:362px;top:788px;" width="18" height="17" viewBox="0 0 18 17"><path d="M9 1 L17.3 16 H0.7 Z" fill="#FFCC00" stroke="#E8B400" stroke-width="0.8" stroke-linejoin="round"/><path d="M9 6 V11.3" stroke="#1E1E1E" stroke-width="2"/><rect x="8" y="12.6" width="2" height="2" fill="#1E1E1E"/></svg>
<span class="t" style="left:387px;top:787.21px;font-size:14.4px;color:#1e1e1e;letter-spacing:0.192px;">0 Advertencias</span>
<div class="r" style="left:498px;top:786px;width:1px;height:22px;background:#CCCEDB;"></div>
<svg class="r" style="left:506px;top:787px;" width="20" height="20" viewBox="506 787 20 20"><circle cx="516.100" cy="797" r="8.700" fill="#1BA1E2"/><rect x="514.700" y="795.200" width="2.900" height="7.600" fill="#FFFFFF"/><rect x="514.700" y="791" width="2.900" height="2.900" fill="#FFFFFF"/></svg>
<span class="t" style="left:532px;top:787.21px;font-size:14.4px;color:#1e1e1e;letter-spacing:0.027px;">0 de 3 Mensajes</span>
<div class="r" style="left:651px;top:786px;width:1px;height:22px;background:#CCCEDB;"></div>
<div class="r" style="left:657px;top:783px;width:27px;height:27px;background:#F5F5F5;box-sizing:border-box;border:1px solid #3399FF;"></div>
<svg class="r" style="left:660px;top:786px;" width="21" height="21" viewBox="660 786 21 21"><path d="M662.300 789.300 L668.700 795.700 M668.700 789.300 L662.300 795.700" stroke="#A1260D" stroke-width="2"/><path d="M667 793.600 H679 V794.600 L674.700 799 V804.400 L671.400 802.600 V799 L667 794.600 Z" fill="#424242" stroke="#F5F5F5" stroke-width="0.800"/></svg>
<div class="r" style="left:689px;top:786px;width:1px;height:22px;background:#CCCEDB;"></div>
<div class="r" style="left:698px;top:784px;width:188px;height:25px;background:#FFFFFF;box-sizing:border-box;border:1px solid #CCCEDB;"></div>
<span class="t" style="left:703.5px;top:787.21px;font-size:14.4px;color:#1e1e1e;letter-spacing:0.324px;">Compilación + IntelliSen</span>
<svg class="r" style="left:872.4px;top:795px;" width="8.0" height="4" viewBox="872.4 795 8.0 4"><path d="M872.6999999999999 795 H880.1 L876.4 798.8 Z" fill="#717171"/></svg>
<div class="r" style="left:1219px;top:782px;width:249px;height:27px;background:#FFFFFF;box-sizing:border-box;border:1px solid #CCCEDB;"></div>
<span class="t" style="left:1225.7px;top:787.21px;font-size:14.4px;color:#6D6D6D;letter-spacing:0.101px;">Lista de errores de búsqueda</span>
<svg class="r" style="left:1433px;top:787px;" width="18" height="18" viewBox="0 0 18 18"><circle cx="11.5" cy="6.5" r="4" fill="none" stroke="#717171" stroke-width="2.2"/><path d="M8.6 9.4 L2.2 15.8" stroke="#717171" stroke-width="3"/></svg>
<svg class="r" style="left:1456.3px;top:795px;" width="8.0" height="4" viewBox="1456.3 795 8.0 4"><path d="M1456.6 795 H1464.0 L1460.3 798.8 Z" fill="#717171"/></svg>
<div class="r" style="left:41px;top:813px;width:1428px;height:27px;background:#F5F5F5;"></div>
<div class="r" style="left:41px;top:840px;width:1428px;height:1px;background:#E0E3E6;"></div>
<div class="r" style="left:74px;top:814px;width:1px;height:26px;background:#CCCEDB;"></div>
<div class="r" style="left:107px;top:814px;width:1px;height:26px;background:#CCCEDB;"></div>
<div class="r" style="left:169px;top:814px;width:1px;height:26px;background:#CCCEDB;"></div>
<div class="r" style="left:862px;top:814px;width:1px;height:26px;background:#CCCEDB;"></div>
<div class="r" style="left:1050px;top:814px;width:1px;height:26px;background:#CCCEDB;"></div>
<div class="r" style="left:1238px;top:814px;width:1px;height:26px;background:#CCCEDB;"></div>
<div class="r" style="left:1281px;top:814px;width:1px;height:26px;background:#CCCEDB;"></div>
<div class="r" style="left:1438px;top:814px;width:1px;height:26px;background:#CCCEDB;"></div>
<div class="r" style="left:1467px;top:814px;width:1px;height:26px;background:#CCCEDB;"></div>
<svg class="r" style="left:94px;top:817px;" width="7" height="6" viewBox="0 0 7 6"><path d="M0 0.5 H7 M2 2.5 H7 M4 4.5 H7" stroke="#717171" stroke-width="1"/></svg>
<span class="t" style="left:112px;top:817.91px;font-size:14.4px;color:#1e1e1e;">Códi...</span>
<span class="t" style="left:175.5px;top:817.91px;font-size:14.4px;color:#1e1e1e;letter-spacing:0.201px;">Descripción</span>
<span class="t" style="left:868px;top:817.91px;font-size:14.4px;color:#1e1e1e;letter-spacing:0.080px;">Proyecto</span>
<span class="t" style="left:1055.8px;top:817.91px;font-size:14.4px;color:#1e1e1e;letter-spacing:0.231px;">Archivo</span>
<span class="t" style="left:1243.2px;top:817.91px;font-size:14.4px;color:#1e1e1e;letter-spacing:-0.578px;">Lí...</span>
<span class="t" style="left:1287.4px;top:817.91px;font-size:14.4px;color:#1e1e1e;letter-spacing:0.252px;">Estado suprimido</span>
<div class="r" style="left:40px;top:968px;width:124px;height:25px;background:#F5F5F5;box-sizing:border-box;border:1px solid #CCCEDB;border-top:none;"></div>
<span class="t" style="left:47.4px;top:970.81px;font-size:14.4px;color:#0E70C0;letter-spacing:-0.134px;">Lista de errores...</span>
<span class="t" style="left:171px;top:970.81px;font-size:14.4px;color:#444444;letter-spacing:0.106px;">Salida</span>
<div class="r" style="left:0px;top:1000px;width:1919px;height:29px;background:#007ACC;"></div>
<svg class="r" style="left:4px;top:1007px;" width="23" height="18" viewBox="4 1007 23 18"><path d="M8.700 1009.600 H24.500 L21.500 1022.200 H5.700 Z" fill="none" stroke="#FFFFFF" stroke-width="1.400" stroke-linejoin="round"/><path d="M11.300 1012.900 H17.800" stroke="#FFFFFF" stroke-width="1.500"/></svg>
<span class="t" style="left:35.4px;top:1005.81px;font-size:14.4px;color:#FFFFFF;letter-spacing:0.200px;">Elementos guardados</span>
<svg class="r" style="left:1565px;top:1007px;" width="14" height="16" viewBox="0 0 14 16"><path d="M7 15 V2.5 M2 7.5 L7 2 L12 7.5" fill="none" stroke="#fff" stroke-width="2"/></svg>
<span class="t" style="left:1589.3px;top:1006.41px;font-size:14.4px;color:#FFFFFF;letter-spacing:0.423px;">Agregar al control de código fuente</span>
<svg class="r" style="left:1835px;top:1012px;" width="11" height="6" viewBox="0 0 11 6"><path d="M0 6 L5.5 0 L11 6 Z" fill="#fff"/></svg>
<svg class="r" style="left:1871px;top:1005.5px;" width="18" height="19.5" viewBox="0 0 16 18"><path d="M8 1 C11.5 1 13 4 13 7.5 C13 11 14.5 12 15.5 13.5 H0.5 C1.5 12 3 11 3 7.5 C3 4 4.500 1 8 1 Z M6 14.5 H10 C10 17.5 6 17.5 6 14.5 Z" fill="#B5D6EE"/></svg>
<div class="r" style="left:1882.3px;top:1012.7px;width:14.700000000000045px;height:14.700000000000045px;background:#E51400;border-radius:50%;"></div>
<span class="t" style="left:1886.5px;top:1010.32px;font-size:11.5px;color:#FFFFFF;letter-spacing:0.094px;">2</span>
<div class="r" style="left:1478px;top:89px;width:435px;height:494px;background:#F5F5F5;box-sizing:border-box;border:1px solid #CCCEDB;"></div>
<div class="r" style="left:1479px;top:90px;width:433px;height:88px;background:#EEEEF2;"></div>
<span class="t" style="left:1483.7px;top:94.01px;font-size:14.4px;color:#444444;letter-spacing:0.200px;">Explorador de soluciones</span>
<svg class="r" style="left:1660px;top:100px" width="180" height="6.500" viewBox="0 0 180 6.500"><rect width="180" height="6.500" fill="url(#gp)"/></svg>
<svg class="r" style="left:1850.5px;top:100px;" width="10" height="6" viewBox="0 0 10 6"><path d="M0 0 H10 L5 5.5 Z" fill="#1E1E1E"/></svg>
<svg class="r" style="left:1871px;top:96px;" width="10" height="14" viewBox="0 0 10 14"><path d="M2.400 1 H7.800" stroke="#1E1E1E" stroke-width="1.300"/><path d="M3.300 1 V7.500" stroke="#1E1E1E" stroke-width="1.200"/><rect x="5.200" y="1" width="2.200" height="6.800" fill="#1E1E1E"/><path d="M1 7.900 H9.200" stroke="#1E1E1E" stroke-width="1.400"/><path d="M5.100 8 V13.600" stroke="#1E1E1E" stroke-width="1.300"/></svg>
<svg class="r" style="left:1892px;top:97px;" width="12" height="12" viewBox="0 0 12 12"><path d="M1.200 1.200 L10.800 10.800 M10.800 1.200 L1.200 10.800" stroke="#1E1E1E" stroke-width="1.900"/></svg>
<svg class="r" style="left:1488px;top:125px;" width="18" height="18" viewBox="1488 125 18 18"><circle cx="1496.900" cy="134" r="7.200" fill="#C6C6CA"/><path d="M1501.300 134 H1493.500 M1496.300 130.600 L1492.800 134 L1496.300 137.400" fill="none" stroke="#EEEEF2" stroke-width="2"/></svg>
<svg class="r" style="left:1515px;top:125px;" width="18" height="18" viewBox="1515 125 18 18"><circle cx="1524" cy="134" r="7.200" fill="#C6C6CA"/><path d="M1519.600 134 H1527.400 M1524.600 130.600 L1528.100 134 L1524.600 137.400" fill="none" stroke="#EEEEF2" stroke-width="2"/></svg>
<svg class="r" style="left:1541px;top:123px;" width="20" height="21" viewBox="1541 123 20 21"><path d="M1544.900 133.500 V142 H1557.500 V133.500" fill="#F0F0F0" stroke="#424242" stroke-width="1.400"/><path d="M1543 134.600 L1551 126.300 L1559.200 134.600" fill="none" stroke="#1E1E1E" stroke-width="1.700"/><path d="M1555.400 125 V130" stroke="#1E1E1E" stroke-width="1.200"/><rect x="1549" y="136" width="4" height="6.200" fill="#424242"/></svg>
<svg class="r" style="left:1569px;top:122px;" width="21" height="21" viewBox="1569 122 21 21"><path d="M1577 126.500 H1580 L1581 123.900 H1586.700 Q1587.700 123.900 1587.700 124.900 V134 H1577 Z" fill="#DCB67A"/><rect x="1582" y="125" width="4.600" height="1.200" fill="#F0E0C4"/><rect x="1570.800" y="131.300" width="10.300" height="8.500" fill="#F0F0F0" stroke="#424242" stroke-width="1.400"/><rect x="1570.100" y="130.600" width="11.700" height="2.600" fill="#424242"/><path d="M1571.500 126.600 H1575.800 M1574 124.400 L1576.300 126.600 L1574 128.800" fill="none" stroke="#00529B" stroke-width="1.400"/><path d="M1587 136 V138.600 H1583.300 M1585.200 136.400 L1583 138.600 L1585.200 140.800" fill="none" stroke="#00529B" stroke-width="1.400"/></svg>
<svg class="r" style="left:1595.8px;top:132px;" width="8.0" height="4" viewBox="1595.8 132 8.0 4"><path d="M1596.1 132 H1603.5 L1599.8 135.8 Z" fill="#717171"/></svg>
<div class="r" style="left:1611px;top:121px;width:1px;height:24px;background:#CCCEDB;"></div>
<svg class="r" style="left:1622px;top:123px;" width="19" height="20" viewBox="1622 123 19 20"><path d="M1623.600 124.300 H1629.400 L1627.200 126.800 V128.900 H1625.800 V126.800 Z" fill="#424242"/><circle cx="1633.600" cy="135.300" r="5.600" fill="none" stroke="#1E1E1E" stroke-width="1.300"/><path d="M1633.300 132 V135.800 H1636.500" fill="none" stroke="#1E1E1E" stroke-width="1.200"/></svg>
<svg class="r" style="left:1647.8px;top:132px;" width="8.0" height="4" viewBox="1647.8 132 8.0 4"><path d="M1648.1 132 H1655.5 L1651.8 135.8 Z" fill="#717171"/></svg>
<svg class="r" style="left:1663px;top:125px;" width="18" height="18" viewBox="1663 125 18 18"><path d="M1676.800 129.800 H1666.500 M1669.500 126.400 L1665.700 129.800 L1669.500 133.200" fill="none" stroke="#2D2D2D" stroke-width="2.100"/><path d="M1667.200 137.500 H1677.500 M1674.700 134.100 L1678.500 137.500 L1674.700 140.900" fill="none" stroke="#2D2D2D" stroke-width="2.100"/></svg>
<svg class="r" style="left:1691px;top:124px;" width="18" height="18" viewBox="1691 124 18 18"><path d="M1698.500 128.500 V126.900 H1706.200 V135 H1704.500" fill="none" stroke="#555555" stroke-width="1.200"/><path d="M1696 131 V129.400 H1703.700 V137.500 H1702" fill="none" stroke="#555555" stroke-width="1.200"/><rect x="1693.600" y="132" width="7.700" height="7.700" fill="#F5F5F5" stroke="#424242" stroke-width="1.300"/><path d="M1695.300 136 H1699.300" stroke="#1B7FCC" stroke-width="1.500"/></svg>
<svg class="r" style="left:1716px;top:124px;" width="20" height="20" viewBox="1716 124 20 20"><path d="M1721.500 125.700 H1719 Q1717.600 125.700 1717.600 127.100 V136.500 Q1717.600 137.800 1719 137.800 H1720.500" fill="none" stroke="#555555" stroke-width="1.300"/><path d="M1725 127.500 V125.700 H1731.300 L1734.300 128.700 V136.600 Q1734.300 137.800 1733 137.800 H1731.800" fill="none" stroke="#555555" stroke-width="1.300"/><path d="M1731.200 125.800 V128.800 H1734.200 Z" fill="#424242"/><path d="M1722.200 130.800 H1727.500 L1730.600 133.900 V140.800 Q1730.600 142 1729.400 142 H1722.200 Q1721 142 1721 140.800 V132 Q1721 130.800 1722.200 130.800 Z" fill="#F5F5F5" stroke="#424242" stroke-width="1.300"/><path d="M1727.400 130.900 V134 H1730.500 Z" fill="#424242"/><path d="M1723.300 135.300 H1728.300 M1723.300 137.500 H1728.300 M1723.300 139.700 H1728.300" stroke="#555555" stroke-width="1"/></svg>
<div class="r" style="left:1744px;top:121px;width:1px;height:24px;background:#CCCEDB;"></div>
<svg class="r" style="left:1753px;top:124px;" width="21" height="20" viewBox="1753 124 21 20"><path d="M1757.2 140.20000000000002 L1765.0 132.4" stroke="#2D2D2D" stroke-width="3.600" stroke-linecap="round"/><circle cx="1766.8" cy="130.9" r="4.800" fill="#2D2D2D"/><path d="M1767.0 130.70000000000002 L1773.2 124.5" stroke="#EEEEF2" stroke-width="3.400"/></svg>
<div class="r" style="left:1777px;top:119px;width:27px;height:29px;background:#F5F5F5;box-sizing:border-box;border:1px solid #3399FF;"></div>
<svg class="r" style="left:1780px;top:129px;" width="21" height="10" viewBox="1780 129 21 10"><path d="M1781.300 136 H1790" stroke="#424242" stroke-width="1.100"/><rect x="1789.500" y="131.600" width="9.400" height="4.900" fill="#424242"/></svg>
<div class="r" style="left:1479px;top:151px;width:434px;height:27px;background:#FFFFFF;box-sizing:border-box;border:1px solid #CCCEDB;"></div>
<span class="t" style="left:1485.7px;top:156.01px;font-size:14.4px;color:#6D6D6D;letter-spacing:0.112px;">Buscar en Explorador de soluciones (Ctrl+´)</span>
<svg class="r" style="left:1876px;top:155px;" width="18" height="18" viewBox="0 0 18 18"><circle cx="11.500" cy="6.500" r="4" fill="none" stroke="#717171" stroke-width="2.200"/><path d="M8.600 9.400 L2.200 15.800" stroke="#717171" stroke-width="3"/></svg>
<svg class="r" style="left:1900.5px;top:163px;" width="8.0" height="4" viewBox="1900.5 163 8.0 4"><path d="M1900.8 163 H1908.2 L1904.5 166.8 Z" fill="#717171"/></svg>
<div class="r" style="left:1479px;top:318px;width:433px;height:24px;background:#CCCEDB;"></div>
<span class="t" style="left:1520.3px;top:182.81px;font-size:14.4px;color:#1e1e1e;letter-spacing:0.144px;">Solución "OpenAndParseFile" (1 de 1 proyecto)</span>
<span class="t" style="left:1543px;top:205.81px;font-size:14.4px;color:#1e1e1e;font-weight:bold;letter-spacing:-0.048px;">OpenAndParseFile</span>
<span class="t" style="left:1565.7px;top:228.81px;font-size:14.4px;color:#1e1e1e;letter-spacing:0.086px;">Dependencias</span>
<span class="t" style="left:1588.2px;top:251.81px;font-size:14.4px;color:#1e1e1e;letter-spacing:0.310px;">Marcos de trabajo</span>
<span class="t" style="left:1588.2px;top:274.81px;font-size:14.4px;color:#1e1e1e;letter-spacing:-0.295px;">Paquetes</span>
<div class="r" style="left:1605px;top:296px;width:307px;height:23px;overflow:hidden;">
<span class="t" style="left:5.2px;top:1.81px;font-size:14.4px;color:#1e1e1e;letter-spacing:0.253px;">System.Configuration.ConfigurationManager (</span>
</div>
<span class="t" style="left:1565.7px;top:320.81px;font-size:14.4px;color:#1e1e1e;letter-spacing:0.398px;">App.config</span>
<span class="t" style="left:1565.7px;top:343.81px;font-size:14.4px;color:#1e1e1e;letter-spacing:-0.187px;">Program.cs</span>
<svg class="r" style="left:1491px;top:210px;" width="11" height="11" viewBox="1491 210 11 11"><path d="M1500.3 212.0 V219.4 H1492.8999999999999 Z" fill="#1E1E1E"/></svg>
<svg class="r" style="left:1513px;top:233px;" width="11" height="11" viewBox="1513 233 11 11"><path d="M1522.8 235.0 V242.4 H1515.3999999999999 Z" fill="#1E1E1E"/></svg>
<svg class="r" style="left:1536px;top:254px;" width="11" height="15" viewBox="1536 254 11 15"><path d="M1538.6 256.5 L1543.6 261.5 L1538.6 266.5 Z" fill="none" stroke="#1E1E1E" stroke-width="1.2"/></svg>
<svg class="r" style="left:1536px;top:279px;" width="11" height="11" viewBox="1536 279 11 11"><path d="M1545.2 281.00000000000006 V288.40000000000003 H1537.8 Z" fill="#1E1E1E"/></svg>
<svg class="r" style="left:1558px;top:300px;" width="11" height="15" viewBox="1558 300 11 15"><path d="M1561.1 302.5 L1566.1 307.5 L1561.1 312.5 Z" fill="none" stroke="#1E1E1E" stroke-width="1.2"/></svg>
<svg class="r" style="left:1513px;top:346px;" width="11" height="15" viewBox="1513 346 11 15"><path d="M1516.1999999999998 348.5 L1521.1999999999998 353.5 L1516.1999999999998 358.5 Z" fill="none" stroke="#1E1E1E" stroke-width="1.2"/></svg>
<svg class="r" style="left:1494px;top:183px;" width="21" height="20" viewBox="1494 183 21 20"><path d="M1496.2 191 V185.3 H1512.2 V198.2 H1506.5" fill="none" stroke="#424242" stroke-width="1.4"/><rect x="1495.5" y="184.600" width="17.400" height="3" fill="#424242"/><path d="M1502.800 192.700 L1504.800 193.500 V200.700 L1502.800 201.500 L1498.700 197.800 L1496.600 199.400 L1495.600 198.900 V195.300 L1496.600 194.800 L1498.700 196.400 Z M1502.700 195.200 L1500.300 197.100 L1502.700 199 Z" fill="#8A3FD1" fill-rule="evenodd"/></svg>
<div class="r" style="left:1518px;top:209px;width:18px;height:14px;background:#FFFFFF;box-sizing:border-box;border:1.400px solid #5FA05C;"></div>
<span class="t" style="left:1520.4px;top:206.31px;font-size:9.5px;color:#555555;font-weight:bold;letter-spacing:0.962px;">C#</span>
<svg class="r" style="left:1539px;top:231px;" width="20" height="15" viewBox="1539 231 20 15"><rect x="1552.400" y="232.700" width="5.400" height="5.600" fill="#424242"/><rect x="1547" y="234" width="5" height="3.600" fill="#8C8C8C"/><rect x="1545" y="235.800" width="3.600" height="3.600" fill="#424242"/><rect x="1540.200" y="240.300" width="4" height="3.600" fill="#424242"/><rect x="1544.200" y="241.300" width="3.500" height="1.600" fill="#8C8C8C"/><rect x="1548.800" y="239.300" width="5.300" height="5.400" fill="#424242"/></svg>
<svg class="r" style="left:1562px;top:255px;" width="20" height="13" viewBox="1562 255 20 13"><rect x="1563.200" y="260" width="3.600" height="3.600" fill="#424242"/><path d="M1566.500 261.800 H1569" stroke="#424242" stroke-width="1.200"/><rect x="1569.200" y="257" width="11" height="9.200" rx="1.600" fill="#F5F5F5" stroke="#424242" stroke-width="1.300"/><rect x="1571.300" y="260" width="3.400" height="3.400" fill="#424242"/><rect x="1576" y="259" width="2.300" height="2.300" fill="#424242"/><rect x="1576" y="262.600" width="2.300" height="2.300" fill="#424242"/></svg>
<svg class="r" style="left:1562px;top:276px;" width="20" height="19" viewBox="1562 276 20 19"><circle cx="1565.0" cy="278.0" r="1.200" fill="#424242"/><rect x="1566.8" y="280.3" width="14" height="13.300" rx="3.600" fill="#424242"/><circle cx="1571.3999999999999" cy="284.6" r="2.300" fill="#9A9A9A"/><circle cx="1576.3999999999999" cy="289.3" r="2.700" fill="#F5F5F5"/></svg>
<svg class="r" style="left:1584px;top:299px;" width="20" height="19" viewBox="1584 299 20 19"><circle cx="1587.0" cy="300.7" r="1.200" fill="#424242"/><rect x="1588.8" y="303" width="14" height="13.300" rx="3.600" fill="#424242"/><circle cx="1593.3999999999999" cy="307.3" r="2.300" fill="#9A9A9A"/><circle cx="1598.3999999999999" cy="312" r="2.700" fill="#F5F5F5"/></svg>
<svg class="r" style="left:1539px;top:320px;" width="20" height="22" viewBox="1539 320 20 22"><path d="M1546 324.500 V322.700 H1552.300 L1556.300 326.700 V339.300 H1546.500" fill="#F5F5F5" stroke="#424242" stroke-width="1.300"/><path d="M1552.300 322.700 V326.700 H1556.300" fill="none" stroke="#424242" stroke-width="1.100"/><path d="M1544.200 331 V339" stroke="#CCCEDB" stroke-width="4"/><circle cx="1544.200" cy="329.800" r="4.300" fill="#CCCEDB"/><path d="M1544.200 331 V338.600" stroke="#1E1E1E" stroke-width="2.200"/><circle cx="1544.200" cy="329.800" r="3.300" fill="#1E1E1E"/><rect x="1543.200" y="326" width="2" height="3.600" fill="#CCCEDB"/></svg>
<span class="t" style="left:1542.9px;top:344.29px;font-size:11px;color:#388A34;font-weight:bold;letter-spacing:0.025px;">C#</span>
<div class="r" style="left:1499.8px;top:567px;width:360.20000000000005px;height:11px;background:#C2C3C9;"></div>
<svg class="r" style="left:1487px;top:567px;" width="7" height="11" viewBox="0 0 7 11"><path d="M7 0 V11 L0 5.500 Z" fill="#868999"/></svg>
<svg class="r" style="left:1898px;top:567px;" width="7" height="11" viewBox="0 0 7 11"><path d="M0 0 V11 L7 5.500 Z" fill="#868999"/></svg>
<div class="r" style="left:1478px;top:582px;width:181px;height:26px;background:#F5F5F5;box-sizing:border-box;border:1px solid #CCCEDB;border-top:none;"></div>
<span class="t" style="left:1485.2px;top:585.71px;font-size:14.4px;color:#0E70C0;letter-spacing:0.222px;">Explorador de soluciones</span>
<span class="t" style="left:1666px;top:585.71px;font-size:14.4px;color:#444444;letter-spacing:0.177px;">Team Explorer</span>
<div class="r" style="left:1478px;top:616px;width:435px;height:376px;background:#F5F5F5;box-sizing:border-box;border:1px solid #CCCEDB;"></div>
<div class="r" style="left:1479px;top:617px;width:433px;height:28px;background:#EEEEF2;"></div>
<span class="t" style="left:1483.2px;top:621.01px;font-size:14.4px;color:#444444;letter-spacing:0.170px;">Propiedades</span>
<svg class="r" style="left:1576px;top:627px" width="264" height="6.500" viewBox="0 0 264 6.500"><rect width="264" height="6.500" fill="url(#gp)"/></svg>
<svg class="r" style="left:1850px;top:627px;" width="10" height="6" viewBox="0 0 10 6"><path d="M0 0 H10 L5 5.5 Z" fill="#1E1E1E"/></svg>
<svg class="r" style="left:1870px;top:623px;" width="10" height="14" viewBox="0 0 10 14"><path d="M2.400 1 H7.800" stroke="#1E1E1E" stroke-width="1.300"/><path d="M3.300 1 V7.500" stroke="#1E1E1E" stroke-width="1.200"/><rect x="5.200" y="1" width="2.200" height="6.800" fill="#1E1E1E"/><path d="M1 7.900 H9.200" stroke="#1E1E1E" stroke-width="1.400"/><path d="M5.100 8 V13.600" stroke="#1E1E1E" stroke-width="1.300"/></svg>
<svg class="r" style="left:1891px;top:624px;" width="12" height="12" viewBox="0 0 12 12"><path d="M1.200 1.200 L10.800 10.800 M10.800 1.200 L1.200 10.800" stroke="#1E1E1E" stroke-width="1.900"/></svg>
<div class="r" style="left:1479px;top:644px;width:433px;height:28px;background:#FFFFFF;"></div>
<svg class="r" style="left:1897.5px;top:657px;" width="8.0" height="4" viewBox="1897.5 657 8.0 4"><path d="M1897.8 657 H1905.2 L1901.5 660.8 Z" fill="#717171"/></svg>
<div class="r" style="left:1479px;top:672px;width:433px;height:33px;background:#EEEEF2;"></div>
<div class="r" style="left:1482px;top:674px;width:29px;height:28px;background:#F5F5F5;box-sizing:border-box;border:1px solid #3399FF;"></div>
<svg class="r" style="left:1486px;top:678px;" width="22" height="20" viewBox="1486 678 22 20"><rect x="1487.7" y="680.2" width="5.200" height="5.200" fill="#2D2D2D"/><path d="M1489.0 682.8000000000001 H1491.6000000000001 M1490.3 681.5 V684.1" stroke="#F5F5F5" stroke-width="1"/><rect x="1487.7" y="690.7" width="5.200" height="5.200" fill="#2D2D2D"/><path d="M1489.0 693.3000000000001 H1491.6000000000001 M1490.3 692.0 V694.6" stroke="#F5F5F5" stroke-width="1"/><path d="M1495.300 680.700 H1502.500 M1495.300 683 H1504.800 M1495.300 685.300 H1504.800 M1495.300 687.600 H1504.800 M1495.300 689.900 H1504.800 M1495.300 692.700 H1502.500 M1495.300 695.500 H1504.800" stroke="#2D2D2D" stroke-width="1" stroke-dasharray="7.200 0.600 1.700 10"/></svg>
<svg class="r" style="left:1515px;top:678px;" width="21" height="21" viewBox="1515 678 21 21"><rect x="1516.900" y="680.300" width="8.100" height="8.200" fill="#424242"/><path d="M1518.800 687 L1521 682 L1523.200 687 M1519.600 685.400 H1522.400" fill="none" stroke="#F0F0F0" stroke-width="1.100"/><path d="M1517.600 691.500 H1524 L1517.800 696.300 H1524.400" fill="none" stroke="#2D2D2D" stroke-width="1.700"/><path d="M1530.600 683.800 V693.500 M1527.600 690.700 L1530.600 694 L1533.600 690.700" fill="none" stroke="#00529B" stroke-width="1.900"/></svg>
<div class="r" style="left:1543px;top:676px;width:1px;height:25px;background:#CCCEDB;"></div>
<svg class="r" style="left:1550px;top:678px;" width="21" height="20" viewBox="1550 678 21 20"><path d="M1554.9 693.9 L1562.7 686.1" stroke="#A0A0A0" stroke-width="3.600" stroke-linecap="round"/><circle cx="1564.5" cy="684.6" r="4.800" fill="#A0A0A0"/><path d="M1564.7 684.4 L1570.9 678.2" stroke="#EEEEF2" stroke-width="3.400"/></svg>
<div class="r" style="left:1479px;top:912px;width:433px;height:1px;background:#EEEEF2;"></div>
</body></html>
